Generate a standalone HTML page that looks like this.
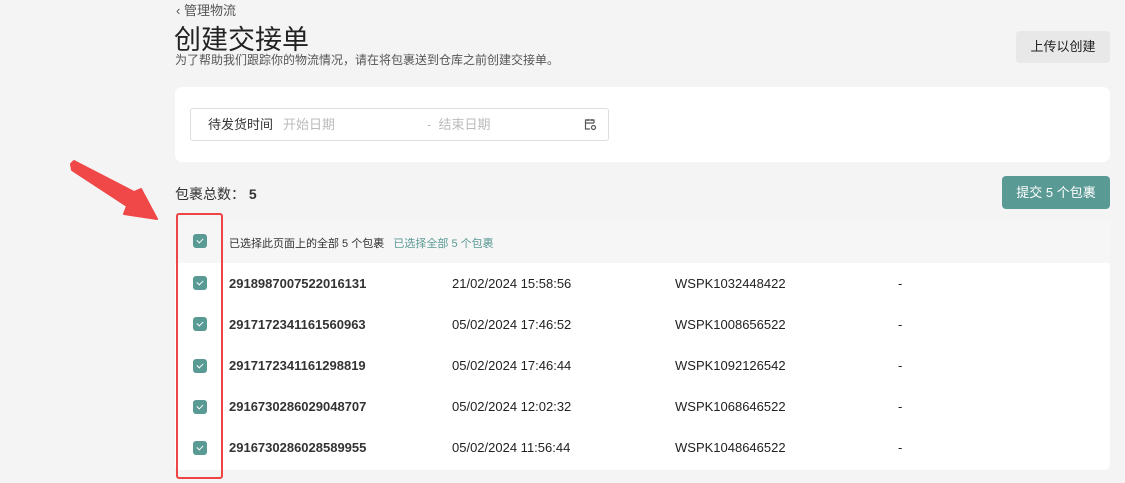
<!DOCTYPE html>
<html><head><meta charset="utf-8"><style>
body{margin:0;width:1125px;height:483px;background:#f4f4f4;font-family:"Liberation Sans","Noto Sans CJK SC",sans-serif;position:relative;overflow:hidden;color:#222}
.a{position:absolute;white-space:nowrap}
.cb{position:absolute;left:193px;width:14px;height:14px;background:#5a9a95;border-radius:3px}
.cb:after{content:"";position:absolute;left:5px;top:3px;width:3px;height:5px;border:solid #fff;border-width:0 1.5px 1.5px 0;transform:rotate(45deg)}
.row{position:absolute;left:175px;width:935px;height:41px;background:#fff;font-size:13px}
.row span{position:absolute;top:13px}
.row span:first-child{font-weight:bold;color:#333}
</style></head><body>
<div class="a" style="left:176px;top:0;font-size:13px;color:#555">‹ 管理物流</div>
<div class="a" style="left:174px;top:18px;font-size:27px;color:#222">创建交接单</div>
<div class="a" style="left:175px;top:51px;font-size:12px;color:#555">为了帮助我们跟踪你的物流情况，请在将包裹送到仓库之前创建交接单。</div>
<div class="a" style="left:1016px;top:31px;width:94px;height:32px;background:#e8e8e8;border-radius:4px;font-size:13px;line-height:32px;text-align:center">上传以创建</div>
<div class="a" style="left:175px;top:87px;width:935px;height:75px;background:#fff;border-radius:7px"></div>
<div class="a" style="left:190px;top:108px;width:417px;height:31px;border:1px solid #ddd;border-radius:3px;background:#fff;font-size:13px;line-height:31px">
<span style="position:absolute;left:17px;color:#333">待发货时间</span>
<span style="position:absolute;left:92px;color:#bbb">开始日期</span>
<span style="position:absolute;left:236px;color:#bbb">- &nbsp;结束日期</span>
<svg style="position:absolute;left:393px;top:9px" width="13" height="13" viewBox="0 0 13 13"><path d="M10 5V2H1.5V11H6M1.5 5H10M4 1V3M8 1V3" fill="none" stroke="#555" stroke-width="1.2"/><circle cx="9.5" cy="9.5" r="2" fill="none" stroke="#555" stroke-width="1.2"/></svg>
</div>
<div class="a" style="left:175px;top:184px;font-size:14px;color:#333">包裹总数： <b style="font-weight:bold">5</b></div>
<div class="a" style="left:1002px;top:176px;width:108px;height:33px;background:#5a9a95;border-radius:4px;color:#fff;font-size:13px;line-height:33px;text-align:center">提交 5 个包裹</div>
<div class="a" style="left:175px;top:221px;width:935px;height:42px;background:#f6f6f6"></div>
<div class="cb" style="top:234px"></div>
<div class="a" style="left:229px;top:235px;font-size:11px;color:#333">已选择此页面上的全部 5 个包裹 &nbsp; <span style="color:#5a9a95">已选择全部 5 个包裹</span></div>
<div class="row" style="top:263px"><span style="left:54px">2918987007522016131</span><span style="left:277px">21/02/2024 15:58:56</span><span style="left:500px">WSPK1032448422</span><span style="left:723px">-</span></div>
<div class="row" style="top:304px"><span style="left:54px">2917172341161560963</span><span style="left:277px">05/02/2024 17:46:52</span><span style="left:500px">WSPK1008656522</span><span style="left:723px">-</span></div>
<div class="row" style="top:345px"><span style="left:54px">2917172341161298819</span><span style="left:277px">05/02/2024 17:46:44</span><span style="left:500px">WSPK1092126542</span><span style="left:723px">-</span></div>
<div class="row" style="top:386px"><span style="left:54px">2916730286029048707</span><span style="left:277px">05/02/2024 12:02:32</span><span style="left:500px">WSPK1068646522</span><span style="left:723px">-</span></div>
<div class="row" style="top:427px;height:43px;border-radius:0 0 6px 6px"><span style="left:54px">2916730286028589955</span><span style="left:277px">05/02/2024 11:56:44</span><span style="left:500px">WSPK1048646522</span><span style="left:723px">-</span></div>
<div class="cb" style="top:276px"></div><div class="cb" style="top:317px"></div><div class="cb" style="top:359px"></div><div class="cb" style="top:400px"></div><div class="cb" style="top:441px"></div>
<div class="a" style="left:176px;top:213px;width:43px;height:262px;border:2px solid #ef4444;border-radius:3px"></div>
<svg class="a" style="left:0;top:0" width="200" height="240"><polygon points="71,164 74,161 134,192 141,189 157,219 124,214 127,206 72,170" fill="#f04848" stroke="#f04848" stroke-linejoin="round" stroke-width="2"/></svg>
</body></html>
